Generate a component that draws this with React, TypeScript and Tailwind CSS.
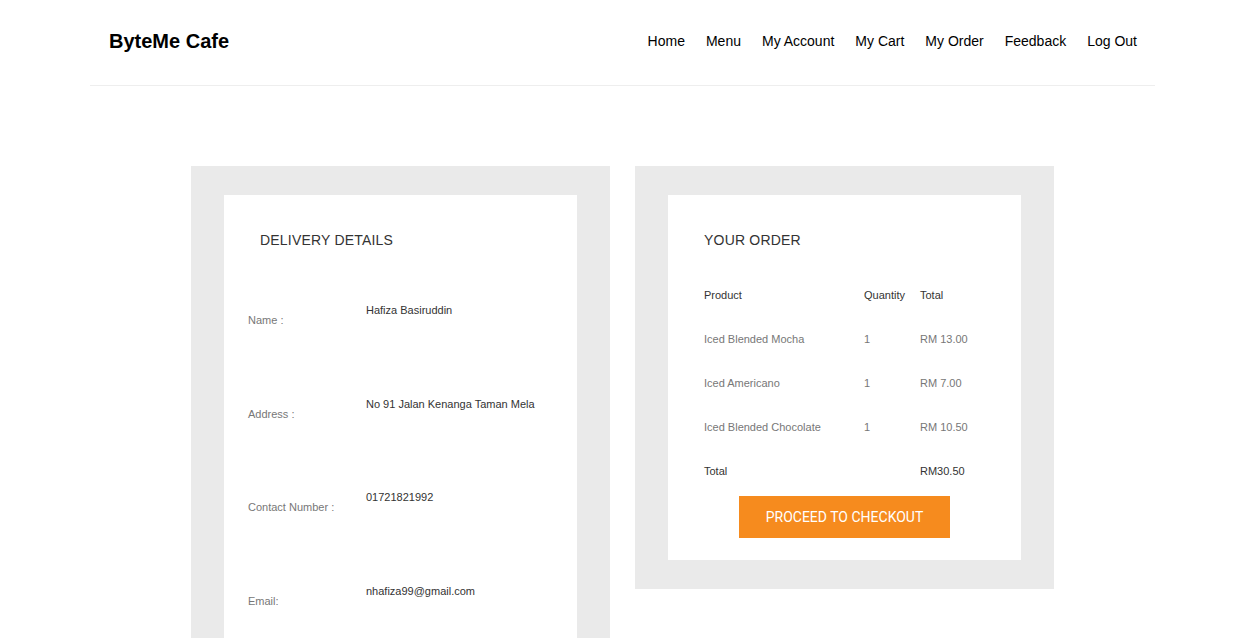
export default function App() {
  const details = [
    { label: "Name :", value: "Hafiza Basiruddin" },
    { label: "Address :", value: "No 91 Jalan Kenanga Taman Mela" },
    { label: "Contact Number :", value: "01721821992" },
    { label: "Email:", value: "nhafiza99@gmail.com" },
  ];
  const items = [
    { name: "Iced Blended Mocha", qty: "1", total: "RM 13.00" },
    { name: "Iced Americano", qty: "1", total: "RM 7.00" },
    { name: "Iced Blended Chocolate", qty: "1", total: "RM 10.50" },
  ];

  return (
    <div className="min-h-screen bg-white font-['Liberation_Sans',Arial,sans-serif] text-[#333]">
      <header className="ml-[90px] w-[1065px] h-[86px] border-b border-[#eeeeee] flex items-center justify-between pl-[19px] pr-[18px] pb-[4px]">
        <div className="text-[20px] font-bold text-black leading-none">ByteMe Cafe</div>
        <nav className="flex gap-[21px] text-[14px] text-black leading-none">
          <a>Home</a>
          <a>Menu</a>
          <a>My Account</a>
          <a>My Cart</a>
          <a>My Order</a>
          <a>Feedback</a>
          <a>Log Out</a>
        </nav>
      </header>

      <main className="flex items-start gap-[25px] ml-[191px] mt-[80px]">
        <section className="w-[419px] bg-[#eaeaea] px-[33px] pt-[29px] pb-[29px]">
          <div className="bg-white pb-[40px]">
            <h2 className="pl-[36px] pt-[37px] text-[14px] leading-[16px] text-[#333] tracking-[0.2px]">
              DELIVERY DETAILS
            </h2>
            <div className="mt-[55px] pl-[24px] text-[11px] leading-[14px]">
              {details.map((d) => (
                <div key={d.label} className="flex h-[93.6px]">
                  <div className="w-[118px] pt-[10px] text-[#777]">{d.label}</div>
                  <div className="text-[#333]">{d.value}</div>
                </div>
              ))}
            </div>
          </div>
        </section>

        <section className="w-[419px] bg-[#eaeaea] px-[33px] pt-[29px] pb-[29px]">
          <div className="bg-white pb-[22px]">
            <h2 className="pl-[36px] pt-[37px] text-[14px] leading-[16px] text-[#333] tracking-[0.2px]">
              YOUR ORDER
            </h2>
            <div className="mt-[40px] pl-[36px] text-[11px] leading-[14px]">
              <div className="flex h-[44px] text-[#333]">
                <div className="w-[160px]">Product</div>
                <div className="w-[56px]">Quantity</div>
                <div>Total</div>
              </div>
              {items.map((it) => (
                <div key={it.name} className="flex h-[44px] text-[#777]">
                  <div className="w-[160px]">{it.name}</div>
                  <div className="w-[56px]">{it.qty}</div>
                  <div>{it.total}</div>
                </div>
              ))}
              <div className="flex h-[18px] text-[#333]">
                <div className="w-[216px]">Total</div>
                <div>RM30.50</div>
              </div>
            </div>
            <div className="flex justify-center mt-[14px]">
              <button className="w-[211px] h-[42px] bg-[#f68b1e] text-white text-[14px] uppercase font-['Roboto',sans-serif]">
                Proceed to Checkout
              </button>
            </div>
          </div>
        </section>
      </main>
    </div>
  );
}
